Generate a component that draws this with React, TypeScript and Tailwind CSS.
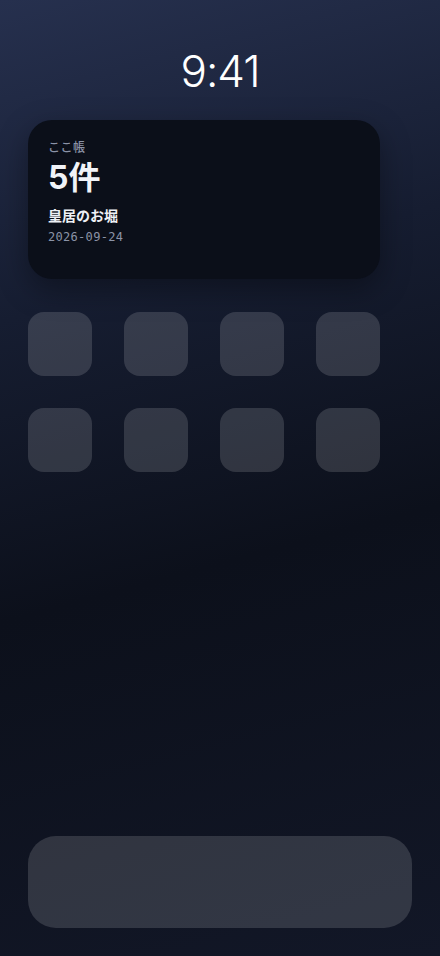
import React from "react";

export default function App() {
  const icons = Array.from({ length: 8 });
  return (
    <div
      className="w-[440px] h-[956px] flex flex-col overflow-hidden bg-[linear-gradient(165deg,#26304e_0%,#161d31_30%,#0c101b_58%,#121727_100%)]"
      style={{ fontFamily: "Inter, 'Noto Sans CJK JP', sans-serif" }}
    >
      <div className="pt-[42px] text-center text-white text-[44px] leading-[58px] font-light tracking-tight">
        9:41
      </div>
      <div className="mt-[20px] mx-[28px] w-[352px] h-[159px] rounded-[24px] bg-[#0b0f19] shadow-[0_10px_30px_rgba(0,0,0,0.35)] px-[20px] pt-[20px] flex flex-col">
        <div className="text-[12px] leading-[16px] text-[#8b93a7] tracking-[0.5px] font-medium">ここ帳</div>
        <div className="mt-[3px] text-[32px] leading-[38px] font-bold text-[#f1f3f8]">5件</div>
        <div className="mt-[9px] text-[14px] leading-[20px] font-semibold text-[#eef0f5]">皇居のお堀</div>
        <div
          className="mt-[3px] text-[12px] leading-[16px] text-[#8b93a7] tracking-[0.3px]"
          style={{ fontFamily: "'DejaVu Sans Mono', monospace" }}
        >
          2026-09-24
        </div>
      </div>
      <div className="mt-[33px] mx-[28px] w-[352px] grid grid-cols-4 gap-x-[32px] gap-y-[32px]">
        {icons.map((_, i) => (
          <div key={i} className="w-[64px] h-[64px] rounded-[16px] bg-white/[0.14]" />
        ))}
      </div>
      <div className="mt-auto mb-[28px] mx-[28px] h-[92px] rounded-[28px] bg-white/[0.14]" />
    </div>
  );
}
